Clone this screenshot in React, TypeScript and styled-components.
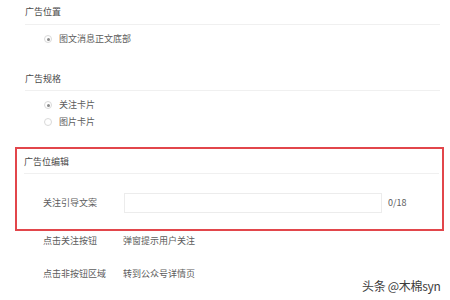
import React from 'react';
import styled, { createGlobalStyle } from 'styled-components';

const GlobalStyle = createGlobalStyle`
  html, body {
    margin: 0;
    padding: 0;
    background: #fff;
  }
  body {
    font-family: "Noto Sans CJK SC", "Noto Sans", sans-serif;
    color: #444;
  }
`;

const Page = styled.div`
  position: relative;
  width: 450px;
  height: 300px;
  overflow: hidden;
  box-sizing: border-box;
  padding: 0 6px 0 15px;
  font-size: 9px;
  line-height: 12px;
`;

const Section = styled.div<{ $top: number }>`
  margin-top: ${(p) => p.$top}px;
  padding: 0 4px 0 10px;
`;

const Title = styled.div`
  color: #4a4a4a;
`;

const Divider = styled.div<{ $top: number; $bottom: number }>`
  height: 1px;
  background: #f0f0f0;
  margin: ${(p) => p.$top}px 0 ${(p) => p.$bottom}px;
`;

const RadioList = styled.div`
  display: flex;
  flex-direction: column;
  gap: 5px;
  padding-left: 19px;
`;

const RadioRow = styled.label`
  display: flex;
  align-items: center;
  gap: 7px;
  color: #5c5c5c;
`;

const RadioDot = styled.span<{ $checked?: boolean }>`
  width: 6px;
  height: 6px;
  border-radius: 50%;
  border: 1px solid #d9d9d9;
  background: #fff;
  display: flex;
  align-items: center;
  justify-content: center;

  &::after {
    content: '';
    width: 3px;
    height: 3px;
    border-radius: 50%;
    background: ${(p) => (p.$checked ? '#8a8a8a' : 'transparent')};
  }
`;

const EditBox = styled.div`
  margin-top: 19px;
  border: 2px solid #e2464b;
  padding: 7px 3px 16px 7px;
`;

const FieldRow = styled.div`
  display: flex;
  align-items: center;
  padding-left: 19px;
`;

const Label = styled.span`
  width: 81px;
  flex-shrink: 0;
  color: #5c5c5c;
`;

const TextInput = styled.div`
  width: 256px;
  height: 18px;
  border: 1px solid #ececec;
  background: #fff;
`;

const Counter = styled.span`
  margin-left: 6px;
  color: #5c5c5c;
`;

const InfoRow = styled.div<{ $top: number }>`
  display: flex;
  margin-top: ${(p) => p.$top}px;
  padding-left: 28px;
  color: #5c5c5c;
`;

const InfoLabel = styled.span`
  width: 80px;
  flex-shrink: 0;
`;

const Watermark = styled.div`
  position: absolute;
  left: 362px;
  top: 279px;
  font-size: 12px;
  line-height: 14px;
  color: #3c3c3c;
  letter-spacing: -0.3px;
`;

export default function App() {
  return (
    <>
      <GlobalStyle />
      <Page>
        <Section $top={6}>
          <Title>广告位置</Title>
          <Divider $top={6} $bottom={8} />
          <RadioList>
            <RadioRow>
              <RadioDot $checked />
              图文消息正文底部
            </RadioRow>
          </RadioList>
        </Section>

        <Section $top={28}>
          <Title>广告规格</Title>
          <Divider $top={5} $bottom={8} />
          <RadioList>
            <RadioRow>
              <RadioDot $checked />
              关注卡片
            </RadioRow>
            <RadioRow>
              <RadioDot />
              图片卡片
            </RadioRow>
          </RadioList>
        </Section>

        <EditBox>
          <Title>广告位编辑</Title>
          <Divider $top={5} $bottom={19} />
          <FieldRow>
            <Label>关注引导文案</Label>
            <TextInput />
            <Counter>0/18</Counter>
          </FieldRow>
        </EditBox>

        <InfoRow $top={4}>
          <InfoLabel>点击关注按钮</InfoLabel>
          <span>弹窗提示用户关注</span>
        </InfoRow>
        <InfoRow $top={21}>
          <InfoLabel>点击非按钮区域</InfoLabel>
          <span>转到公众号详情页</span>
        </InfoRow>

        <Watermark>头条 @木棉syn</Watermark>
      </Page>
    </>
  );
}
